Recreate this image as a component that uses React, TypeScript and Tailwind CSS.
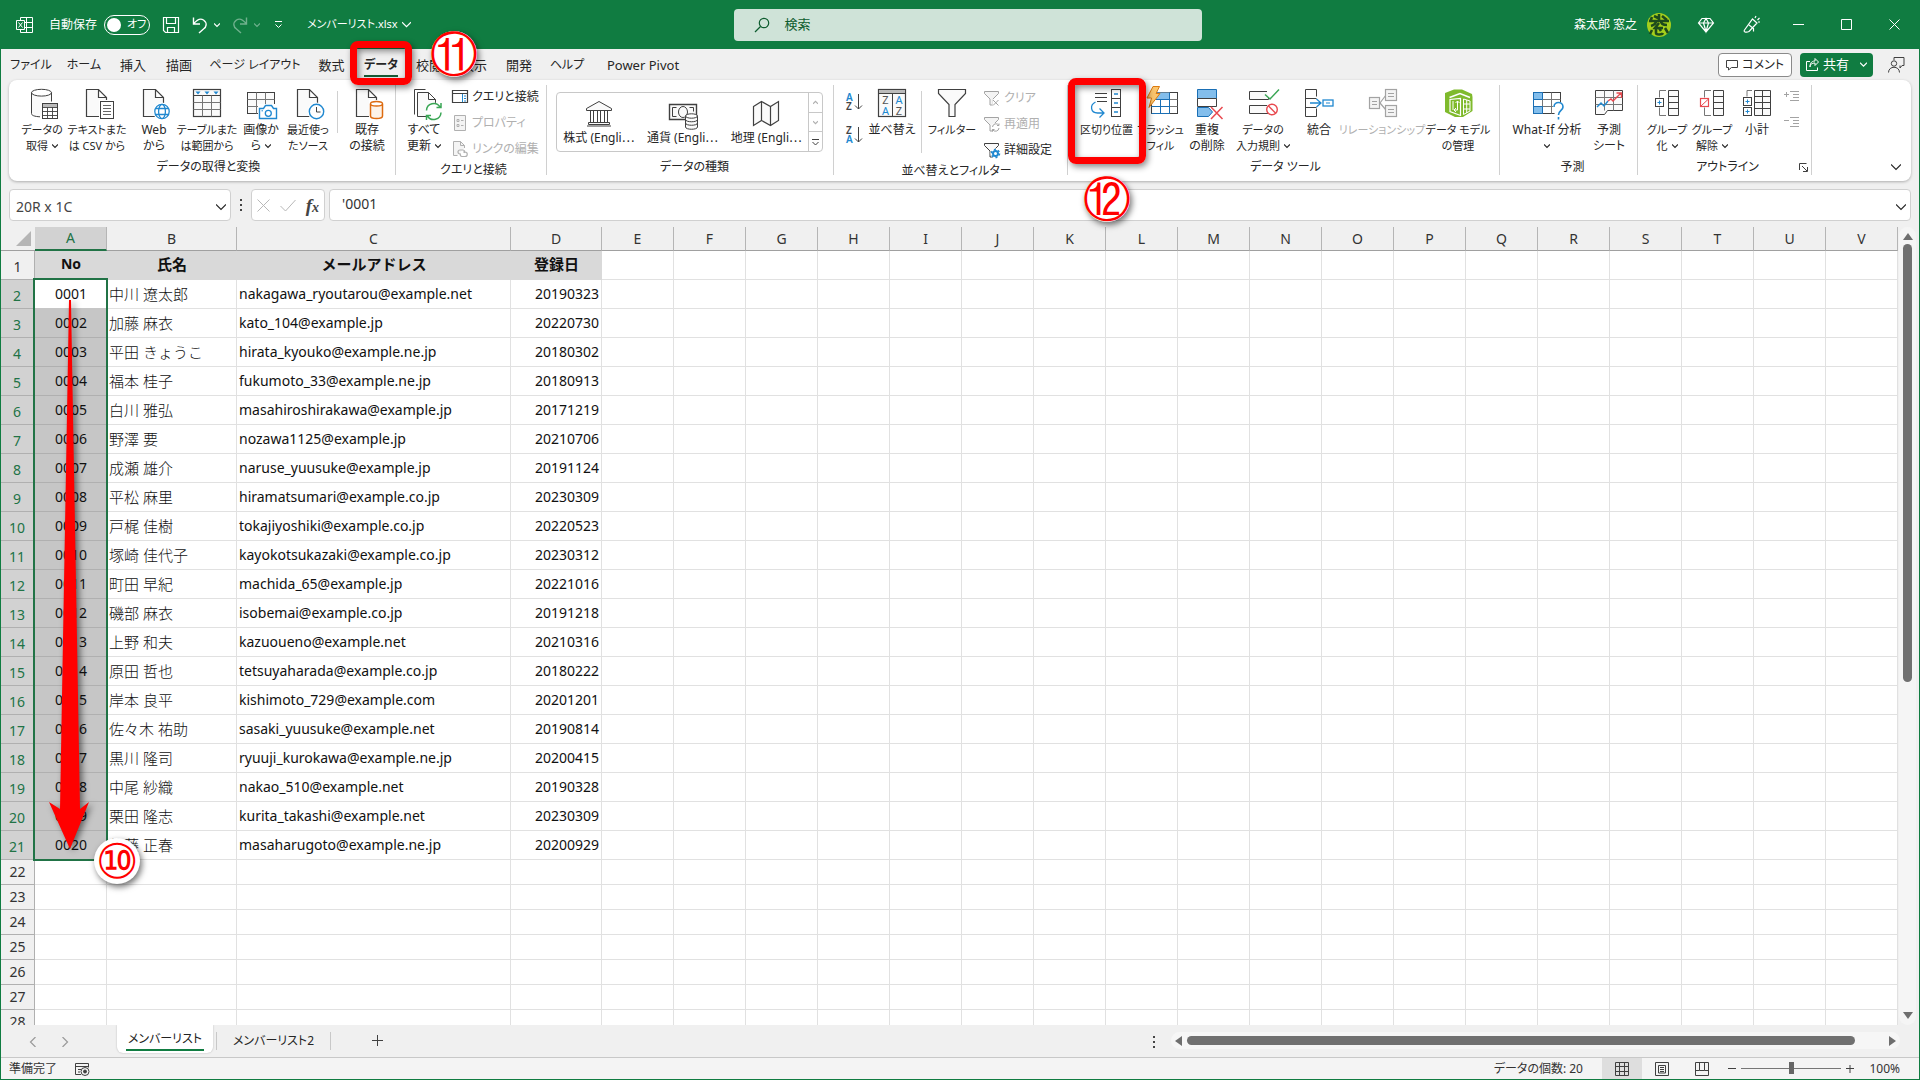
import type { ReactNode } from 'react';

const K = '#404040';
const B = '#2088d0';
const BF = '#83beec';

/* ---------- shared drawing helpers ---------- */

function Svg({ w = 32, h = 32, children, stroke = K }: { w?: number; h?: number; children: ReactNode; stroke?: string }) {
  return (
    <svg width={w} height={h} viewBox={`0 0 ${w} ${h}`} fill="none" stroke={stroke} className="shrink-0 overflow-visible" aria-hidden="true">
      {children}
    </svg>
  );
}

function Chevron({ size = 6, up = false, left = false, right = false }: { size?: number; up?: boolean; left?: boolean; right?: boolean }) {
  const rot = up ? 'rotate-180' : left ? 'rotate-90' : right ? '-rotate-90' : '';
  return (
    <svg width={size} height={size} viewBox="0 0 10 10" fill="none" stroke="currentColor" strokeWidth={12 / size} className={'inline-block shrink-0 ' + rot} aria-hidden="true">
      <path d="M0 2.5 L5 7.5 L10 2.5" />
    </svg>
  );
}

function Doc({ x = 6.5 }: { x?: number }) {
  return <path d={`M${x} 1.5 h12 l8 8 v19 h-20z M${x + 12} 1.5 v8 h8`} fill="#fafafa" strokeWidth="1.2" />;
}

const icons = {
  database: (
    <Svg>
      <path d="M5.5 4.5 v21 c0 2 4 3 10 3 v-15 h10 v-9z" fill="#fafafa" stroke="none" />
      <ellipse cx="15.5" cy="4.7" rx="10" ry="3.4" fill="#fff" />
      <path d="M5.5 4.5 v21 c0 2 3 3 8.5 3.3 M25.5 4.5 v9" />
      <rect x="16.5" y="15.5" width="15" height="15" fill="#fff" />
      <rect x="17" y="16" width="14" height="3" fill="#bbb" stroke="none" />
      <path d="M16.5 19.5h15M16.5 23.5h15M16.5 27.5h15M21.5 19.5v11M26.5 19.5v11" strokeWidth=".9" />
    </Svg>
  ),
  text: (
    <Svg>
      <Doc x={5.5} />
      <rect x="18" y="12" width="15" height="20" fill="#fff" stroke="none" />
      <rect x="19.5" y="13.5" width="13" height="17" fill="#fff" />
      <path d="M22 17.5h8M22 20.5h8M22 23.5h8M22 26.5h8" stroke="#666" />
    </Svg>
  ),
  web: (
    <Svg>
      <Doc x={5.5} />
      <circle cx="24" cy="23.5" r="9" fill="#fff" stroke="none" />
      <g stroke={B} strokeWidth="1.3">
        <circle cx="24" cy="23.5" r="7.2" fill="#fff" />
        <ellipse cx="24" cy="23.5" rx="3.4" ry="7.2" />
        <path d="M17.5 20.5h13M17.5 26.5h13" />
      </g>
    </Svg>
  ),
  table: (
    <Svg>
      <rect x="2.5" y="1.5" width="27" height="27" fill="#fafafa" strokeWidth="1.2" />
      <path d="M2.5 7.5h27" />
      <path d="M2.5 14.5h27M2.5 21.5h27M11.5 7.5v21M20.5 7.5v21" stroke="#767676" />
      <path d="M4.5 3.5h5l-2.5 3zM13.5 3.5h5l-2.5 3zM22.5 3.5h5l-2.5 3z" fill={B} stroke="none" />
    </Svg>
  ),
  image: (
    <Svg>
      <rect x="2.5" y="4.5" width="27" height="21" fill="#fafafa" />
      <path d="M2.5 11.5h27M2.5 18.5h27M11.5 4.5v21M20.5 4.5v21" stroke="#767676" />
      <path d="M13 16h20v16h-20z" fill="#fff" stroke="none" />
      <path d="M14.5 20.5h4l2-3h6l2 3h3v10h-17z" stroke={B} strokeWidth="1.4" fill="#fff" />
      <circle cx="23.3" cy="25.3" r="3" stroke={B} strokeWidth="1.3" />
      <path d="M16.5 22.8h1.5" stroke={B} />
    </Svg>
  ),
  recent: (
    <Svg>
      <Doc x={5.5} />
      <circle cx="24.5" cy="23.5" r="9" fill="#fff" stroke="none" />
      <circle cx="24.5" cy="23.5" r="7.2" fill="#fff" stroke={B} strokeWidth="1.4" />
      <path d="M24.5 19v5h4" />
    </Svg>
  ),
  existing: (
    <Svg>
      <Doc x={5.5} />
      <path d="M18 12h15v20h-15z" fill="#fff" stroke="none" />
      <g stroke="#dd6b10" strokeWidth="1.5">
        <path d="M19.5 16v12c0 1.500 3 2.500 6 2.500s6-1 6-2.500v-12" fill="#fdf3e8" />
        <ellipse cx="25.500" cy="15.700" rx="6" ry="2.300" fill="#fff" />
      </g>
    </Svg>
  ),
  refresh: (
    <Svg>
      <path d="M6.500 26.500v-25h11" />
      <path d="M9.500 28.500v-24h11l7 7v17z M20.500 4.500v7h7" fill="#fafafa" />
      <circle cx="26" cy="23.500" r="9" fill="#fff" stroke="none" />
      <path d="M18.500 22.500a7.300 7.300 0 0 1 13.500-3.500M33 15v4.500h-4.500M33 24.500a7.300 7.300 0 0 1-13.500 3.500M18.500 32v-4.500h4.500" stroke="#3aa655" strokeWidth="1.500" />
    </Svg>
  ),
  sort: (
    <Svg>
      <rect x="2.500" y="1.500" width="27" height="27" fill="#fafafa" strokeWidth="1.200" />
      <rect x="3" y="2" width="26" height="3" fill="#bbb" stroke="none" />
      <path d="M2.500 5.500h27M16.500 5.500v23" />
      <g stroke="none" fontSize="11" textAnchor="middle" fontFamily="Noto Sans">
        <text x="9.500" y="16" fill="#555">Z</text>
        <text x="9.500" y="27" fill={B}>A</text>
        <text x="23" y="16" fill={B}>A</text>
        <text x="23" y="27" fill="#555">Z</text>
      </g>
    </Svg>
  ),
  filter: (
    <Svg>
      <path d="M2.500 1.500h27v4l-10.500 11v12h-6v-12l-10.500-11z" fill="#fafafa" strokeWidth="1.200" />
    </Svg>
  ),
  columns: (
    <Svg>
      <path d="M4 5.500h12M4 9.500h12M6 13.500h10" />
      <rect x="20.500" y="1.500" width="9" height="27" fill="#fff" />
      <path d="M20.500 10.500h9M20.500 19.500h9" />
      <path d="M23 6h4M23 15h4M23 24h4M4.500 14c-6 3-5 11 2 11h6M8.500 20.500l4.500 4.500l-4.500 4.500" stroke={B} strokeWidth="1.300" />
    </Svg>
  ),
  flash: (
    <Svg>
      <rect x="6.500" y="4.500" width="26" height="21" fill="#fff" />
      <path d="M9.500 4.500h15v7h-15z" fill={BF} stroke="none" />
      <path d="M6.500 11.500h26M6.500 18.500h26M15.500 11.500v14M24.500 4.500v21" stroke="#767676" />
      <path d="M6.500 25.500h18v-21M6.500 18.500h18M15.500 11.500v14M6.500 11.500h18" stroke="#1a6fb5" />
      <path d="M8-1.500h6.500l-3.500 7h4l-11 14l2.500-9.500h-4.500z" fill="#fbc56d" stroke="#dd7b10" />
    </Svg>
  ),
  duplicate: (
    <Svg>
      <path d="M6.500 1.500h19v9h-19z" fill={BF} stroke="#1a6fb5" />
      <path d="M6.500 10.500h19v8h-19z" fill="#fff" />
      <path d="M6.500 19.500h11l4 4.500l-4 4.500h-11z" fill={BF} stroke="#1a6fb5" />
      <path d="M20 19l11.500 12M31.500 19l-11.500 12" stroke="#e8494f" strokeWidth="1.500" />
    </Svg>
  ),
  validation: (
    <Svg>
      <path d="M20 3.500h-17.500v8h19v-2M20 17.500h-17.500v8h19" fill="#fafafa" />
      <path d="M18 6.500l5 4.500l9-9.500" stroke="#3aa655" strokeWidth="1.500" />
      <circle cx="25" cy="21.500" r="5.300" stroke="#e8494f" strokeWidth="1.400" fill="#fff" />
      <path d="M21.300 17.800l7.400 7.400" stroke="#e8494f" strokeWidth="1.400" />
    </Svg>
  ),
  consolidate: (
    <Svg>
      <path d="M13.500 8.500v-7h-11v27h11v-8M2.500 10.500h11M2.500 19.500h11" fill="#fff" />
      <path d="M7 15h10.500M13.500 11l4.500 4l-4.500 4" stroke={B} strokeWidth="1.300" />
      <rect x="20" y="12" width="10" height="6" stroke={B} strokeWidth="1.300" />
      <path d="M23 15h4" stroke={B} />
    </Svg>
  ),
  relation: (
    <Svg stroke="#a3a3a3">
      <g fill="#f4f4f4" strokeWidth="1.200">
        <path d="M14 15l6-8M14 15l6 7" />
        <rect x="3.500" y="9.500" width="10" height="11" />
        <rect x="19.500" y="1.500" width="11" height="11" />
        <rect x="19.500" y="17.500" width="11" height="11" />
        <path d="M6 13.500h5M6 16.500h5M22 5.500h6M22 8.500h6M22 21.500h6M22 24.500h6" />
      </g>
    </Svg>
  ),
  model: (
    <Svg stroke="#fff">
      <path d="M3 5l9-3.500h8l10 4.500l.500 3v14l-9.500 6h-8l-10-5z" fill="#7fba2c" stroke="none" />
      <path d="M7.500 9.500l10.500-4l10 4" strokeWidth="1.600" />
      <path d="M8 11.500v12l10.500 4v-17z" strokeWidth="1.200" />
      <path d="M21.500 11v15.500l6.500-3.500v-10zM21.500 16h6.500M21.500 21h6.500M24.700 12v13" />
      <path d="M11 13v9M15.500 13v9h-3M13.500 15l2-2l2 2M14 20l-2 2l2 2" />
    </Svg>
  ),
  whatif: (
    <Svg>
      <rect x="2.500" y="4.500" width="27" height="21" fill="#fff" />
      <path d="M11.500 4.500v21M20.500 4.500v21M2.500 11.500h27M2.500 18.500h27" stroke="#767676" />
      <path d="M2.500 4.500h9v7h-9zM2.500 18.500h9v7h-9z" fill={BF} stroke="#1a6fb5" />
      <path d="M2.500 11.500v7" stroke="#1a6fb5" />
      <path d="M21 14h13v18h-9z" fill="#fff" stroke="none" />
      <path d="M23 19c0-6 9-6 9 0c0 3.500-4.500 3.500-4.500 8M27.500 29v2.500" stroke={B} strokeWidth="1.600" />
    </Svg>
  ),
  forecast: (
    <Svg>
      <path d="M2.500 2.500h27v20h-15l-3 4h-9z" fill="#fafafa" />
      <path d="M2.500 9.500h27M2.500 16.500h27M11.500 2.500v20M20.500 2.500v20" stroke="#767676" />
      <path d="M4 19l4-4l3 3l4-5" stroke={B} strokeWidth="1.400" />
      <path d="M15 13l3-2l2 2l8-8M23.500 5h5v5" stroke="#e8494f" strokeWidth="1.400" />
    </Svg>
  ),
  group: (
    <Svg>
      <path d="M15 2.500h-6.500v7M15 27.500h-6.500v-8" stroke="#767676" />
      <path d="M17.500 2.500h10v25h-10zM17.500 8.500h10M17.500 14.500h10M17.500 20.500h10" fill="#fafafa" />
      <rect x="4.500" y="10.500" width="8" height="8" fill="#fff" />
      <path d="M6.500 14.500h4M8.500 12.500v4" stroke={B} />
    </Svg>
  ),
  ungroup: (
    <Svg>
      <path d="M15 2.500h-6.500v7M15 27.500h-6.500v-8" stroke="#767676" />
      <path d="M17.500 2.500h10v25h-10zM17.500 8.500h10M17.500 14.500h10M17.500 20.500h10" fill="#fafafa" />
      <rect x="4.500" y="10.500" width="8" height="8" fill="#fff" stroke="#e8494f" strokeWidth="1.200" />
      <path d="M5 18l7.500-7" stroke="#e8494f" />
    </Svg>
  ),
  subtotal: (
    <Svg>
      <path d="M11 2.500h-5v6" stroke="#767676" />
      <path d="M13.500 2.500h16v25h-16zM13.500 8.500h16M13.500 14.500h16M13.500 20.500h16M21.500 2.500v25" fill="#fafafa" />
      <rect x="2.500" y="9.500" width="8" height="8" fill="#fff" />
      <rect x="2.500" y="19.500" width="8" height="8" fill="#fff" />
      <path d="M4.500 13.500h4M6.500 11.500v4M4.500 23.500h4M6.500 21.500v4" stroke={B} />
    </Svg>
  ),
  bank: (
    <Svg>
      <path d="M3.500 10.500l12.500-7l12.500 7v2h-25zM5.500 24.500h21v2h-21zM4 28h24" fill="#fafafa" />
      <path d="M7.500 12.500v12M10.500 12.500v12M14.500 12.500v12M17.500 12.500v12M21.500 12.500v12M24.500 12.500v12" />
    </Svg>
  ),
  money: (
    <Svg>
      <path d="M2.500 6.500h27v15h-27z" fill="#fafafa" strokeWidth="1.400" />
      <path d="M9.500 9.500h-4v9h4M22.500 9.500h4v4" />
      <ellipse cx="16" cy="14" rx="4.500" ry="5.500" />
      <path d="M18.500 18v11c0 3 12 3 12 0v-11z" fill="#fafafa" />
      <ellipse cx="24.500" cy="18" rx="6" ry="2.200" fill="#fff" />
      <path d="M18.500 21.500c0 3 12 3 12 0M18.500 25c0 3 12 3 12 0" />
    </Svg>
  ),
  map: (
    <Svg>
      <path d="M3.500 8.500l8-5l9 5l8-5v19l-8 5l-9-5l-8 5zM11.500 3.500v19M20.500 8.500v19" fill="#fafafa" strokeWidth="1.200" />
    </Svg>
  ),
};

/* ---------- annotations ---------- */

function Step({ n, className }: { n: string; className: string }) {
  return (
    <div className={'pointer-events-none absolute z-30 flex h-[46px] w-[46px] items-center justify-center rounded-full bg-white shadow-[2px_3px_6px_rgba(0,0,0,0.55)] ' + className}>
      <span className='font-["DejaVu_Sans",sans-serif] text-[48px] leading-[46px] text-[#ff0000]'>{n}</span>
    </div>
  );
}

function Highlight({ className }: { className: string }) {
  return <div className={'pointer-events-none absolute z-20 rounded-lg border-[7px] border-[#ff0000] shadow-[2px_3px_6px_rgba(0,0,0,0.45),inset_2px_3px_6px_rgba(0,0,0,0.45)] ' + className} />;
}

/* ---------- title bar ---------- */

function TitleBar() {
  return (
    <header className="flex h-[49px] shrink-0 items-center bg-[#107c41] pl-[15px] text-white">
      <Svg w={18} h={18} stroke="#fff">
        <path d="M4.500 4v-2.500h12v15h-12v-2.500M10.500 1.500v15M4.500 6.500h12M4.500 11.500h12" />
        <path d="M.500 4.500h8v9h-8z" fill="#107c41" />
        <path d="M2.500 6.500l4 5M6.500 6.500l-4 5" />
      </Svg>
      <label className="ml-[15px] flex items-center gap-[7px] whitespace-nowrap">
        自動保存
        <input type="checkbox" className="peer sr-only" />
        <span className="flex h-5 w-[46px] items-center gap-[6px] rounded-full border border-white pl-[2px] text-[11px]">
          <span className="h-[14px] w-[14px] rounded-full bg-white" />
          オフ
        </span>
      </label>
      <button aria-label="上書き保存" className="ml-3">
        <Svg w={18} h={18} stroke="#fff">
          <path d="M1.500 1.500h15v15h-13l-2-2zM4.500 1.500v6h9v-6M5.500 16.500v-5h7v5" strokeWidth="1.200" />
        </Svg>
      </button>
      <button aria-label="元に戻す" className="ml-[11px] flex items-center gap-[5px]">
        <Svg w={18} h={18} stroke="#fff">
          <path d="M2.500 1.500v6.500h6.500M2.500 8c4-5 7-6 10-4c4 3 3 7 0 9l-4.500 4" strokeWidth="1.400" />
        </Svg>
        <Chevron size={6} />
      </button>
      <button aria-label="やり直し" className="ml-[11px] flex items-center gap-[5px] opacity-40">
        <Svg w={18} h={18} stroke="#fff">
          <path d="M15.500 1.500v6.500h-6.500M15.500 8c-4-5-7-6-10-4c-4 3-3 7 0 9l4.500 4" strokeWidth="1.400" />
        </Svg>
        <Chevron size={6} />
      </button>
      <button aria-label="クイック アクセス ツール バーのカスタマイズ" className="ml-[14px]">
        <Svg w={9} h={9} stroke="#fff">
          <path d="M1 1.500h7M1.500 4.500l3 3l3-3" />
        </Svg>
      </button>
      <button className="ml-6 flex w-[112px] items-center gap-1 whitespace-nowrap text-[11px]">
        メンバーリスト.xlsx <Chevron size={9} />
      </button>
      <div className="flex min-w-0 flex-1 justify-center pr-14">
        <label className="flex h-8 w-[468px] items-center gap-[14px] rounded bg-[#cfe3d8] pl-5 text-[#0e5c2f]">
          <Svg w={16} h={16} stroke="#0e5c2f">
            <circle cx="10" cy="6" r="4.700" strokeWidth="1.200" />
            <path d="M6.500 9.500l-5.500 5.500" strokeWidth="1.200" />
          </Svg>
          <input aria-label="検索" placeholder="検索" className="w-full bg-transparent text-[13px] outline-none placeholder:text-[#0e5c2f]" />
        </label>
      </div>
      <div className="flex items-center">
        <button className="flex items-center gap-[10px] whitespace-nowrap">
          森太郎 窓之
          <svg width="24" height="24" viewBox="0 0 24 24" className="shrink-0" aria-hidden="true">
            <circle cx="12" cy="12" r="12" fill="#a5cf1c" />
            <path d="M2 8h20M5 4l-2 5M12 1v6M9 8c0 3-2 4-5 5M14 8c0 3 2 4 6 4M12 10l-4 5h8M5 17l-2 4M9 16v4c0 2 6 2 7 0M12 15l2 3M18 15l3 5M7 3l4 2M15 3l5 4" stroke="#1d4a1c" strokeWidth="2.600" fill="none" />
          </svg>
        </button>
        <button aria-label="Premium" className="ml-[27px]">
          <Svg w={16} h={16} stroke="#fff">
            <path d="M4 1.500h8l3.500 4.500l-7.500 9l-7.500-9zM.500 6h15M5.500 6l2.500 8.500l2.500-8.500M5.500 6l2.500-4.500l2.500 4.500" strokeWidth="1.200" />
          </Svg>
        </button>
        <button aria-label="新機能" className="ml-[29px]">
          <Svg w={17} h={17} stroke="#fff">
            <path d="M9.500 3l4.500 4l-8 8.500c-2 1-6 1-4.500-1.500zM6 9l4.500 3.500v3M12 2l1-2M14.500 4l2-2M15 6h2" strokeWidth="1.200" />
          </Svg>
        </button>
        <button aria-label="最小化" className="ml-[33px]"><Svg w={11} h={11} stroke="#fff"><path d="M0 5.500h11" /></Svg></button>
        <button aria-label="最大化" className="ml-[37px]"><Svg w={11} h={11} stroke="#fff"><path d="M.500 .500h10v10h-10z" /></Svg></button>
        <button aria-label="閉じる" className="mr-[19px] ml-[37px]"><Svg w={11} h={11} stroke="#fff"><path d="M.500 .500l10 10M10.500 .500l-10 10" /></Svg></button>
      </div>
    </header>
  );
}

/* ---------- ribbon tabs ---------- */

const tabs = [
  { t: 'ファイル', w: 'w-[54px]', s: 'text-[12px]' },
  { t: 'ホーム', w: 'w-[52px]', s: 'text-[12px]' },
  { t: '挿入', w: 'w-[46px]', s: 'text-[13px]' },
  { t: '描画', w: 'w-[46px]', s: 'text-[13px]' },
  { t: 'ページ レイアウト', w: 'w-[106px]', s: 'text-[12px]' },
  { t: '数式', w: 'w-[47px]', s: 'text-[13px]' },
  { t: 'データ', w: 'w-[52px]', s: 'text-[12px]', on: true },
  { t: '校閲', w: 'w-[44px]', s: 'text-[13px]' },
  { t: '表示', w: 'w-[46px]', s: 'text-[13px]' },
  { t: '開発', w: 'w-[44px]', s: 'text-[13px]' },
  { t: 'ヘルプ', w: 'w-[52px]', s: 'text-[12px]' },
  { t: 'Power Pivot', w: 'w-[100px]', s: 'text-[13px]' },
];

function TabRow() {
  return (
    <nav className="flex h-[31px] shrink-0 items-center pr-[14px] pl-[3px]">
      {tabs.map((x) => (
        <div key={x.t} className={'relative flex justify-center pt-[2px] ' + x.w}>
          <button className={'whitespace-nowrap border-b-2 leading-5 ' + x.s + (x.on ? ' border-[#185c37] font-bold' : ' border-transparent')}>{x.t}</button>
          {x.on && <Highlight className="-top-[12px] -left-[5px] h-[44px] w-[62px]" />}
          {x.on && <Step n="⑪" className="-top-[22px] left-[76px]" />}
        </div>
      ))}
      <div className="flex-1" />
      <button className="flex h-6 items-center gap-1 rounded border border-[#8a8a8a] bg-white px-[7px] text-[12px] whitespace-nowrap">
        <Svg w={12} h={12}><path d="M.500 1.500h11v7h-6l-3 2.500v-2.500h-2z" /></Svg>
        コメント
      </button>
      <button className="ml-2 flex h-6 items-center gap-1 rounded bg-[#107c41] px-[6px] text-[13px] text-white">
        <Svg w={13} h={13} stroke="#fff"><path d="M4 3.500h-3.500v9h11v-3M4 9c0-3 2-4 5-4v2.500l3.500-3.500l-3.500-3.500v2.500c-4 0-5 3-5 6z" /></Svg>
        共有
        <span className="ml-[7px] flex"><Chevron size={7} /></span>
      </button>
      <button aria-label="共同編集者" className="ml-[15px]">
        <Svg w={17} h={17}><path d="M6 4v-2.500h10v8h-2l-2 2.500v-2.500" /><circle cx="6" cy="7.500" r="2.700" /><path d="M.500 16.500c0-7 11-7 11 0" /></Svg>
      </button>
    </nav>
  );
}

/* ---------- ribbon ---------- */

function Big({ icon, lines, w, drop, dim, on, small }: { icon: keyof typeof icons; lines: string[]; w: string; drop?: boolean; dim?: boolean; on?: boolean; small?: boolean }) {
  return (
    <div className={'relative flex shrink-0 justify-center ' + w}>
      <button className={'flex flex-col items-center gap-[2px] ' + (dim ? 'text-[#b0b0b0]' : '')} disabled={dim}>
        {icons[icon]}
        <span className={'flex flex-col items-center leading-4 whitespace-nowrap ' + (small ? 'text-[11px]' : 'text-[12px]')}>
          {lines.map((l, i) => (
            <span key={i} className="flex h-4 items-center gap-1">
              {l}
              {drop && i === lines.length - 1 && <Chevron size={6} />}
            </span>
          ))}
        </span>
      </button>
      {on && <Highlight className="-top-[10px] -left-[4px] h-[86px] w-[78px]" />}
      {on && <Step n="⑫" className="top-[88px] left-[12px]" />}
    </div>
  );
}

function Small({ label, dim, children }: { label: string; dim?: boolean; children: ReactNode }) {
  return (
    <button disabled={dim} className={'flex h-[26px] items-center gap-1 whitespace-nowrap ' + (dim ? 'text-[#b0b0b0]' : '')}>
      {children}
      {label}
    </button>
  );
}

function Group({ title, w, children, extra }: { title: string; w: string; children: ReactNode; extra?: ReactNode }) {
  return (
    <section className={'flex h-[90px] shrink-0 flex-col border-r border-[#d0d0d0] ' + w}>
      <div className="flex h-[78px] items-start pt-[3px]">{children}</div>
      <div className="relative text-center text-[12px] leading-4 whitespace-nowrap">
        {title}
        {extra}
      </div>
    </section>
  );
}

const funnel = 'M.500 1.500h14v2l-5.500 5.500v6h-3v-6l-5.500-5.500z';

function Ribbon() {
  return (
    <div className="mx-2 flex h-[101px] shrink-0 items-start rounded-lg bg-white pt-[5px] shadow-[0_1px_3px_rgba(0,0,0,0.28)]">
      <Group title="データの取得と変換" w="w-[387px] pl-[13px]">
        <Big icon="database" lines={['データの', '取得']} w="w-[40px]" drop small />
        <Big icon="text" lines={['テキストまた', 'は CSV から']} w="w-[70px]" small />
        <Big icon="web" lines={['Web', 'から']} w="w-[44px]" />
        <Big icon="table" lines={['テーブルまた', 'は範囲から']} w="w-[62px]" small />
        <Big icon="image" lines={['画像か', 'ら']} w="w-[46px]" drop />
        <Big icon="recent" lines={['最近使っ', 'たソース']} w="w-[48px]" small />
        <div className="mr-[6px] ml-[5px] mt-[3px] h-[42px] border-r border-[#d0d0d0]" />
        <Big icon="existing" lines={['既存', 'の接続']} w="w-[46px]" />
      </Group>
      <Group title="クエリと接続" w="w-[151px] pl-[5px]">
        <Big icon="refresh" lines={['すべて', '更新']} w="w-[46px]" drop />
        <div className="-mt-[4px] ml-[5px] flex flex-col text-[12px]">
          <Small label="クエリと接続">
            <Svg w={16} h={16}><path d="M.500 1.500h15v12h-15z" fill="#fff" strokeWidth="1.200" /><path d="M.500 4.500h15" /><path d="M10.500 5v8" stroke={B} /><path d="M12 7h2M12 9.500h2M12 12h2" stroke={B} /></Svg>
          </Small>
          <Small label="プロパティ" dim>
            <Svg w={16} h={16} stroke="#b0b0b0"><path d="M2.500 .500h11v15h-11z" fill="#f4f4f4" /><path d="M5 4.500h2v2h-2zM5 9.500h2v2h-2zM9 5.500h2.500M9 10.500h2.500" /></Svg>
          </Small>
          <Small label="リンクの編集" dim>
            <Svg w={16} h={16} stroke="#b0b0b0"><path d="M12.500 7v-2.500l-4-4h-7v14h4M8.500 .500v4h4" fill="#f4f4f4" /><path d="M9 13h-1a2 2 0 0 1 0-4h3a2 2 0 0 1 1.500 3M11 11h2a2 2 0 0 1 0 4.500h-3a2 2 0 0 1-1.500-3" strokeWidth="1.200" /></Svg>
          </Small>
        </div>
      </Group>
      <Group title="データの種類" w="w-[287px] pl-[9px]">
        <div className="mt-1 flex h-[60px] w-[267px] rounded border border-[#c8c8c8]">
          <div className="flex flex-1">
            {([['bank', '株式 (Engli'], ['money', '通貨 (Engli'], ['map', '地理 (Engli']] as const).map(([i, t]) => (
              <button key={t} className="flex flex-1 flex-col items-center pt-[5px] text-[12px] leading-4 whitespace-nowrap">
                {icons[i]}
                <span>{t}<span className='font-["Noto_Sans_CJK_JP",sans-serif] leading-none'>…</span></span>
              </button>
            ))}
          </div>
          <div className="flex w-[14px] flex-col divide-y divide-[#c8c8c8] border-l border-[#c8c8c8]">
            <button aria-label="前の行" className="flex flex-1 items-center justify-center text-[#b0b0b0]"><Chevron size={5} up /></button>
            <button aria-label="次の行" className="flex flex-1 items-center justify-center text-[#b0b0b0]"><Chevron size={5} /></button>
            <button aria-label="その他" className="flex flex-1 items-center justify-center"><Svg w={7} h={8}><path d="M0 1.500h7M.500 4l3 3l3-3" /></Svg></button>
          </div>
        </div>
      </Group>
      <Group title="並べ替えとフィルター" w="w-[234px] pl-[12px]">
        <div className="mt-[5px] flex flex-col gap-[15px]">
          {[['A', 'Z'], ['Z', 'A']].map(([a, b]) => (
            <button key={a} aria-label={a === 'A' ? '昇順' : '降順'} className="h-[18px]">
              <Svg w={17} h={18}>
                <g stroke="none" fontSize="10" fontFamily="Noto Sans" fontWeight="600">
                  <text x="0" y="8" fill={a === 'A' ? B : '#444'}>{a}</text>
                  <text x="0" y="17" fill={b === 'A' ? B : '#444'}>{b}</text>
                </g>
                <path d="M12.500 1v15M9 12.500l3.500 3.500l3.500-3.500" />
              </Svg>
            </button>
          ))}
        </div>
        <Big icon="sort" lines={['並べ替え']} w="w-[58px]" />
        <div className="mt-[3px] h-[62px] border-r border-[#d0d0d0]" />
        <Big icon="filter" lines={['フィルター']} w="w-[60px]" small />
        <div className="-mt-[3px] ml-[2px] flex flex-col text-[12px]">
          <Small label="クリア" dim><Svg w={16} h={16} stroke="#a3a3a3"><path d={funnel} fill="#f4f4f4" /><path d="M8.500 9h7v7h-7z" fill="#fff" stroke="none" /><path d="M9 10l5.500 5.500M14.500 10l-5.500 5.500" /></Svg></Small>
          <Small label="再適用" dim><Svg w={16} h={16} stroke="#a3a3a3"><path d={funnel} fill="#f4f4f4" /><circle cx="11.500" cy="11.500" r="4.500" fill="#fff" stroke="none" /><path d="M8.500 11a3.500 3.500 0 0 1 6.500-1.500v-2M15 12a3.500 3.500 0 0 1-6.500 1.500v2M15 9.500h-2M8.500 13.500h2" /></Svg></Small>
          <Small label="詳細設定"><Svg w={16} h={16}><path d={funnel} fill="#fafafa" /><circle cx="11.500" cy="11.500" r="5" fill="#fff" stroke="none" /><circle cx="11.500" cy="11.500" r="2.500" stroke={B} strokeWidth="2" /><circle cx="11.500" cy="11.500" r="4" stroke={B} strokeDasharray="2 2.190" strokeWidth="1.500" /></Svg></Small>
        </div>
      </Group>
      <Group title="データ ツール" w="w-[432px] pl-[4px]">
        <Big icon="columns" lines={['区切り位置']} w="w-[69px]" on small />
        <Big icon="flash" lines={['フラッシュ', 'フィル']} w="w-[39px]" small />
        <Big icon="duplicate" lines={['重複', 'の削除']} w="w-[54px]" />
        <Big icon="validation" lines={['データの', '入力規則']} w="w-[58px]" drop small />
        <Big icon="consolidate" lines={['統合']} w="w-[54px]" />
        <Big icon="relation" lines={['リレーションシップ']} w="w-[72px]" dim small />
        <Big icon="model" lines={['データ モデル', 'の管理']} w="w-[80px]" small />
      </Group>
      <Group title="予測" w="w-[138px] pl-[8px]">
        <Big icon="whatif" lines={['What-If 分析', '']} w="w-[78px]" drop />
        <Big icon="forecast" lines={['予測', 'シート']} w="w-[46px]" />
      </Group>
      <Group
        title="アウトライン"
        w="w-[174px] pl-[6px]"
        extra={
          <button aria-label="アウトラインの設定" className="absolute top-1 right-[3px]">
            <Svg w={9} h={9}><path d="M.500 7v-6.500h7M3 3l5 5M8.500 4v4.500h-4.500" /></Svg>
          </button>
        }
      >
        <Big icon="group" lines={['グループ', '化']} w="w-[46px]" drop small />
        <Big icon="ungroup" lines={['グループ', '解除']} w="w-[44px]" drop small />
        <Big icon="subtotal" lines={['小計']} w="w-[46px]" />
        <div className="mt-[2px] ml-[4px] flex flex-col gap-[14px]">
          <button aria-label="詳細データの表示"><Svg w={15} h={12} stroke="#a3a3a3"><path d="M0 4.500h5M2.500 2v5M6 1.500h9M9 4.500h6M9 7.500h6M6 10.500h9" /></Svg></button>
          <button aria-label="詳細を表示しない"><Svg w={15} h={12} stroke="#a3a3a3"><path d="M0 4.500h5M6 1.500h9M9 4.500h6M9 7.500h6M6 10.500h9" /></Svg></button>
        </div>
      </Group>
      <div className="flex h-[90px] flex-1 items-end justify-end pr-[10px]">
        <button aria-label="リボンを折りたたむ"><Chevron size={10} /></button>
      </div>
    </div>
  );
}

/* ---------- formula bar ---------- */

function FormulaBar() {
  return (
    <div className="mx-2 mt-2 flex h-8 shrink-0 items-center text-[14px]">
      <div className="flex h-8 w-[222px] items-center rounded border border-[#d0d0d0] bg-white pr-1">
        <input aria-label="名前ボックス" defaultValue="20R x 1C" className="min-w-0 flex-1 bg-transparent pt-[2px] pl-[6px] text-[#444] outline-none" />
        <button aria-label="名前ボックスの一覧"><Chevron size={10} /></button>
      </div>
      <div className="flex w-[20px] flex-col items-center gap-[3px]">
        <i className="h-[2px] w-[2px] bg-[#444]" /><i className="h-[2px] w-[2px] bg-[#444]" /><i className="h-[2px] w-[2px] bg-[#444]" />
      </div>
      <div className="flex h-8 w-[74px] items-center justify-between rounded border border-[#d0d0d0] bg-white px-[5px]">
        <button aria-label="キャンセル"><Svg w={13} h={13} stroke="#b8b8b8"><path d="M.500 .500l12 12M12.500 .500l-12 12" /></Svg></button>
        <button aria-label="入力"><Svg w={16} h={13} stroke="#b8b8b8"><path d="M.500 7l5 5l10-11" /></Svg></button>
        <button aria-label="関数の挿入" className='font-["Liberation_Serif",serif] text-[19px] leading-none font-bold text-[#444] italic'>f<span className="text-[14px]">x</span></button>
      </div>
      <div className="ml-1 flex h-8 flex-1 items-center rounded border border-[#d0d0d0] bg-white pr-1">
        <input aria-label="数式バー" defaultValue="'0001" className="min-w-0 flex-1 bg-transparent pb-[3px] pl-3 text-[#333] outline-none" />
        <button aria-label="数式バーの展開"><Chevron size={10} /></button>
      </div>
    </div>
  );
}

/* ---------- worksheet ---------- */

const people: [string, string, string][] = [
  ['中川 遼太郎', 'nakagawa_ryoutarou@example.net', '20190323'],
  ['加藤 麻衣', 'kato_104@example.jp', '20220730'],
  ['平田 きょうこ', 'hirata_kyouko@example.ne.jp', '20180302'],
  ['福本 桂子', 'fukumoto_33@example.ne.jp', '20180913'],
  ['白川 雅弘', 'masahiroshirakawa@example.jp', '20171219'],
  ['野澤 要', 'nozawa1125@example.jp', '20210706'],
  ['成瀬 雄介', 'naruse_yuusuke@example.jp', '20191124'],
  ['平松 麻里', 'hiramatsumari@example.co.jp', '20230309'],
  ['戸梶 佳樹', 'tokajiyoshiki@example.co.jp', '20220523'],
  ['塚崎 佳代子', 'kayokotsukazaki@example.co.jp', '20230312'],
  ['町田 早紀', 'machida_65@example.jp', '20221016'],
  ['磯部 麻衣', 'isobemai@example.co.jp', '20191218'],
  ['上野 和夫', 'kazuoueno@example.net', '20210316'],
  ['原田 哲也', 'tetsuyaharada@example.co.jp', '20180222'],
  ['岸本 良平', 'kishimoto_729@example.com', '20201201'],
  ['佐々木 祐助', 'sasaki_yuusuke@example.net', '20190814'],
  ['黒川 隆司', 'ryuuji_kurokawa@example.ne.jp', '20200415'],
  ['中尾 紗織', 'nakao_510@example.net', '20190328'],
  ['栗田 隆志', 'kurita_takashi@example.net', '20230309'],
  ['後藤 正春', 'masaharugoto@example.ne.jp', '20200929'],
];

const letters = 'ABCDEFGHIJKLMNOPQRSTUV'.split('');
const rest = letters.slice(4);
const cell = 'border-r border-b border-[#e1e1e1] whitespace-nowrap ';

function Sheet() {
  return (
    <div className="relative min-w-0 flex-1 overflow-hidden bg-[#f0f0f0]">
      <div className="relative w-[1897px]">
        <table className="w-[1897px] table-fixed border-separate border-spacing-0 bg-white text-[14px] leading-5 text-[#111] [font-feature-settings:normal]">
          <colgroup>
            <col className="w-[34px]" />
            <col className="w-[72px]" />
            <col className="w-[130px]" />
            <col className="w-[274px]" />
            <col className="w-[91px]" />
            {rest.map((l) => <col key={l} className="w-[72px]" />)}
          </colgroup>
          <thead>
            <tr className="h-6 bg-[#f0f0f0] text-[#333]">
              <th className="border-b border-[#a0a0a0]">
                <svg width="15" height="15" viewBox="0 0 15 15" className="mr-1 ml-auto" aria-hidden="true"><path d="M15 0v15h-15z" fill="#b5b5b5" /></svg>
              </th>
              {letters.map((l, i) => (
                <th key={l} className={'border-r border-[#b5b5b5] font-normal ' + (i === 0 ? 'border-b-2 border-b-[#217346] bg-[#d2d2d2] text-[#217346]' : 'border-b border-b-[#a0a0a0]')}>{l}</th>
              ))}
            </tr>
          </thead>
          <tbody>
            <tr className="h-[29px] font-bold">
              <th className="border-r border-b border-[#b0b0b0] bg-[#f0f0f0] pt-1 font-normal text-[#333]">1</th>
              {['No', '氏名', 'メールアドレス', '登録日'].map((h) => (
                <td key={h} className={'bg-[#d9d9d9] pb-[3px] text-center ' + (h === 'No' ? 'text-[14px]' : 'text-[15px]')}>{h}</td>
              ))}
              {rest.map((l) => <td key={l} className={cell} />)}
            </tr>
            {people.map(([name, mail, date], i) => (
              <tr key={mail} className="h-[29px]">
                <th className="border-r-2 border-b border-r-[#217346] border-b-[#b0b0b0] bg-[#d2d2d2] pt-1 font-normal text-[#217346]">{i + 2}</th>
                <td className={'border-b text-center ' + (i === 0 ? 'border-[#c6c6c6] bg-white' : 'border-[#b0b0b0] bg-[#c6c6c6]')}>{String(i + 1).padStart(4, '0')}</td>
                <td className={cell + 'pl-[2px] text-[15px] font-light'}>{name}</td>
                <td className={cell + 'pl-[2px]'}>{mail}</td>
                <td className={cell + 'pr-[2px] text-right'}>{date}</td>
                {rest.map((l) => <td key={l} className={cell} />)}
              </tr>
            ))}
            {[22, 23, 24, 25, 26, 27, 28].map((n) => (
              <tr key={n} className="h-[25px]">
                <th className="border-r border-b border-[#b0b0b0] bg-[#f0f0f0] font-normal text-[#333]">{n}</th>
                {letters.map((l) => <td key={l} className={cell} />)}
              </tr>
            ))}
          </tbody>
        </table>
        <div className="pointer-events-none absolute top-[51px] left-[32px] h-[583px] w-[75px] border-2 border-[#217346]" />
        <svg width="44" height="550" viewBox="0 0 44 550" className="pointer-events-none absolute top-[73px] left-[47px] overflow-visible drop-shadow-[3px_2px_3px_rgba(0,0,0,0.5)]" aria-hidden="true">
          <path d="M21 0h2L32 509l9-7l-19 47l-21-47l11 7z" fill="#ff0000" />
        </svg>
        <Step n="⑩" className="top-[611px] left-[93px]" />
      </div>
    </div>
  );
}

function VScroll() {
  return (
    <div className="flex w-[17px] shrink-0 flex-col items-center rounded-full bg-[#f5f5f5] py-[6px]">
      <button aria-label="上へ"><svg width="10" height="7" viewBox="0 0 10 7" className="block"><path d="M5 0l5 7h-10z" fill="#6e6e6e" /></svg></button>
      <div className="mt-[4px] w-[9px] flex-[57] rounded-full bg-[#707070]" />
      <div className="flex-[43]" />
      <button aria-label="下へ"><svg width="10" height="7" viewBox="0 0 10 7" className="block"><path d="M5 7l5-7h-10z" fill="#6e6e6e" /></svg></button>
    </div>
  );
}

function SheetTabs() {
  return (
    <div className="flex h-8 shrink-0 items-start text-[12px]">
      <div className="flex h-8 w-[116px] items-center gap-[22px] pl-[27px] text-[#9a9a9a]">
        <button aria-label="前のシート"><Chevron size={10} left /></button>
        <button aria-label="次のシート"><Chevron size={10} right /></button>
      </div>
      <button className="flex h-7 w-[96px] justify-center rounded-b-md bg-white pt-1 shadow-[0_0_2px_rgba(0,0,0,0.25)]">
        <span className="h-[22px] border-b-2 border-[#107c41] px-[2px] leading-5 whitespace-nowrap text-[#222]">メンバーリスト</span>
      </button>
      <div className="mt-[7px] ml-[3px] flex h-[18px] w-[115px] items-center justify-center border-x border-[#c8c8c8]">
        <button className="whitespace-nowrap">メンバーリスト2</button>
      </div>
      <button aria-label="新しいシート" className="mt-[10px] ml-[41px]"><Svg w={11} h={11}><path d="M0 5.500h11M5.500 0v11" /></Svg></button>
      <div className="flex-1" />
      <div className="mt-[11px] mr-4 flex flex-col gap-[3px]">
        <i className="h-[2px] w-[2px] bg-[#444]" /><i className="h-[2px] w-[2px] bg-[#444]" /><i className="h-[2px] w-[2px] bg-[#444]" />
      </div>
      <div className="mt-[7px] mr-[19px] flex h-[17px] w-[38%] items-center rounded-full bg-[#f6f6f6] px-[4px]">
        <button aria-label="左へ"><svg width="7" height="10" viewBox="0 0 7 10" className="block"><path d="M0 5l7-5v10z" fill="#6e6e6e" /></svg></button>
        <div className="ml-[5px] h-[9px] flex-1 rounded-full bg-[#707070]" />
        <button aria-label="右へ" className="ml-[34px]"><svg width="7" height="10" viewBox="0 0 7 10" className="block"><path d="M7 5l-7-5v10z" fill="#6e6e6e" /></svg></button>
      </div>
    </div>
  );
}

function StatusBar() {
  return (
    <footer className="flex h-[22px] shrink-0 items-center border-t border-[#c8c8c8] bg-[#f4f4f4] text-[12px] text-[#333]">
      <span className="ml-2">準備完了</span>
      <button aria-label="マクロの記録" className="ml-[18px]">
        <Svg w={15} h={14}><path d="M6 12.500h-5.500v-11h13v4M.500 4.500h13M3 7.500h3M3 10h2" /><circle cx="10" cy="9.500" r="4" /><circle cx="10" cy="9.500" r="1.500" fill={K} /></Svg>
      </button>
      <div className="flex-1" />
      <span className="mr-[19px]">データの個数: 20</span>
      <button aria-label="標準" className="flex h-[21px] w-10 items-center justify-center bg-[#dedede]"><Svg w={14} h={14}><path d="M.500 .500h13v13h-13zM.500 4.500h13M.500 9.500h13M4.500 .500v13M9.500 .500v13" /></Svg></button>
      <button aria-label="ページ レイアウト" className="flex w-10 justify-center"><Svg w={14} h={14}><path d="M.500 .500h13v13h-13zM3.500 3.500h7v7.500h-7zM5 5.500h4M5 7.500h4M5 9.500h4" /></Svg></button>
      <button aria-label="改ページ プレビュー" className="flex w-10 justify-center"><Svg w={14} h={14}><path d="M.500 .500h13v13h-13zM4.500 .500v8h5v-8M.500 8.500h4M9.500 8.500h4" /></Svg></button>
      <button aria-label="縮小" className="ml-[6px]"><Svg w={8} h={8}><path d="M0 3.500h8" /></Svg></button>
      <input
        type="range"
        aria-label="ズーム"
        className="mx-[5px] h-4 w-[100px] appearance-none bg-transparent [&::-webkit-slider-runnable-track]:h-px [&::-webkit-slider-runnable-track]:bg-[#767676] [&::-webkit-slider-thumb]:-mt-[6px] [&::-webkit-slider-thumb]:h-3 [&::-webkit-slider-thumb]:w-[5px] [&::-webkit-slider-thumb]:appearance-none [&::-webkit-slider-thumb]:bg-[#666]"
      />
      <button aria-label="拡大"><Svg w={8} h={8}><path d="M0 3.500h8M4 0v8" /></Svg></button>
      <span className="mr-[19px] w-[46px] text-right">100%</span>
    </footer>
  );
}

export default function App() {
  return (
    <div className='flex h-screen flex-col overflow-hidden border-x border-b border-[#107c41] bg-[#f0f0f0] font-["Noto_Sans","Noto_Sans_CJK_JP",sans-serif] text-[12px] text-[#262626] [font-feature-settings:"palt"]'>
      <TitleBar />
      <TabRow />
      <Ribbon />
      <FormulaBar />
      <main className="mt-[6px] flex min-h-0 flex-1">
        <Sheet />
        <VScroll />
        <div className="w-[3px] shrink-0" />
      </main>
      <SheetTabs />
      <StatusBar />
    </div>
  );
}
